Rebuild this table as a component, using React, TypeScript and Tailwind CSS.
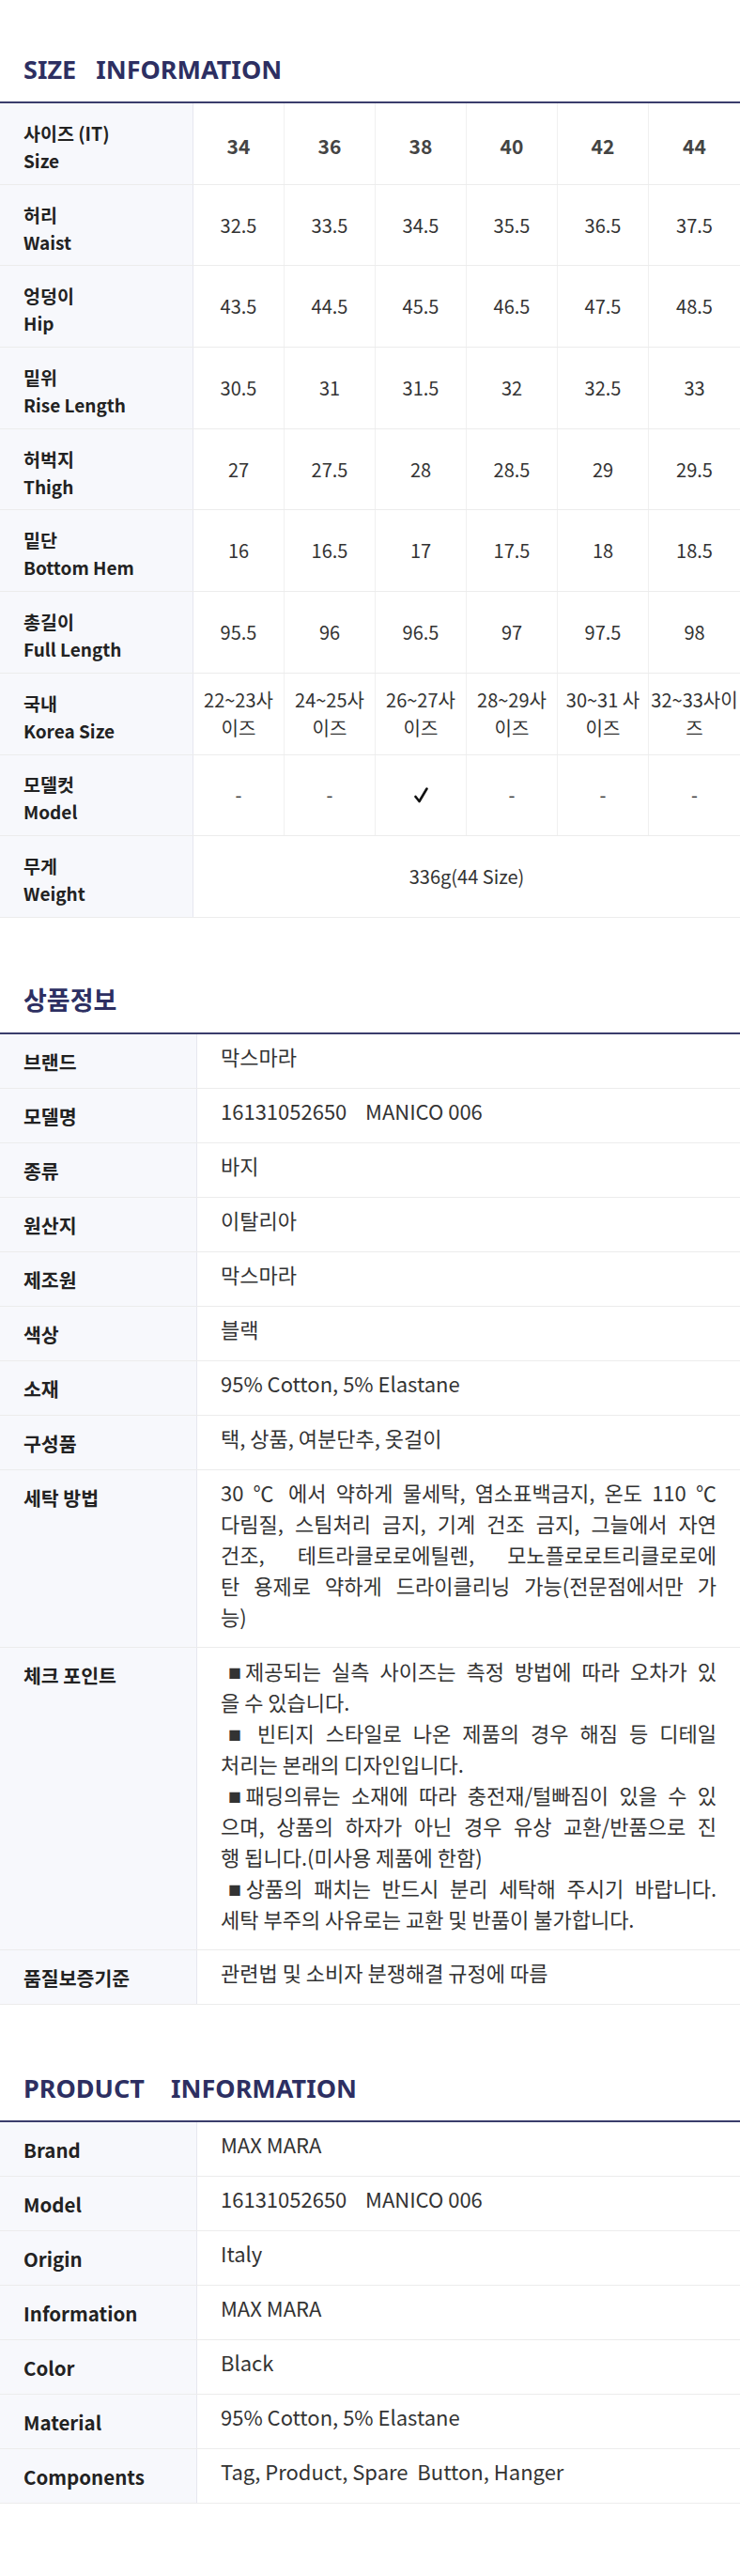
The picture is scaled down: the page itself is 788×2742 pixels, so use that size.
import React from "react";

const sizeRows: { ko: string; en: string; vals: React.ReactNode[]; head?: boolean }[] = [
  { ko: "사이즈 (IT)", en: "Size", vals: ["34", "36", "38", "40", "42", "44"], head: true },
  { ko: "허리", en: "Waist", vals: ["32.5", "33.5", "34.5", "35.5", "36.5", "37.5"] },
  { ko: "엉덩이", en: "Hip", vals: ["43.5", "44.5", "45.5", "46.5", "47.5", "48.5"] },
  { ko: "밑위", en: "Rise Length", vals: ["30.5", "31", "31.5", "32", "32.5", "33"] },
  { ko: "허벅지", en: "Thigh", vals: ["27", "27.5", "28", "28.5", "29", "29.5"] },
  { ko: "밑단", en: "Bottom Hem", vals: ["16", "16.5", "17", "17.5", "18", "18.5"] },
  { ko: "총길이", en: "Full Length", vals: ["95.5", "96", "96.5", "97", "97.5", "98"] },
];

const korea: [string, string][] = [
  ["22~23사", "이즈"],
  ["24~25사", "이즈"],
  ["26~27사", "이즈"],
  ["28~29사", "이즈"],
  ["30~31 사", "이즈"],
  ["32~33사이", "즈"],
];

function Check() {
  return (
    <svg width="15" height="17" viewBox="0 0 15 17" fill="none">
      <path d="M1.5 10 L5.5 15 L13.5 1.5" stroke="#111" strokeWidth="2.6" strokeLinecap="round" strokeLinejoin="round" />
    </svg>
  );
}

function Title({ children }: { children: React.ReactNode }) {
  return (
    <h2 className="pl-[25px] text-[27px] leading-none font-bold text-[#2d2f62] font-['Noto_Sans','Noto_Sans_CJK_KR',sans-serif] whitespace-pre">
      {children}
    </h2>
  );
}

function SizeLabel({ ko, en }: { ko: string; en: string }) {
  return (
    <div className="bg-[#f7f8fc] border-r border-[#e6e7ef] pl-[25px] pt-[6px] flex flex-col justify-center">
      <span className="text-[19.5px] leading-[29px] font-bold text-[#222]">{ko}</span>
      <span className="text-[19px] leading-[29px] font-bold text-[#222]">{en}</span>
    </div>
  );
}

function SizeTable() {
  return (
    <div className="mt-[21px] border-t-2 border-[#3a3d6c]">
      {sizeRows.map((r) => (
        <div key={r.ko} className="grid grid-cols-[206px_repeat(6,minmax(0,1fr))] h-[86.7px] border-b border-[#ececec]">
          <SizeLabel ko={r.ko} en={r.en} />
          {r.vals.map((v, i) => (
            <div
              key={i}
              className={
                r.head
                  ? "flex items-center justify-center border-r border-[#f0f0f0] last:border-r-0 text-[21px] font-bold text-[#444] pt-[6px]"
                  : "flex items-center justify-center border-r border-[#f0f0f0] last:border-r-0 text-[20px] text-[#333]"
              }
            >
              {v}
            </div>
          ))}
        </div>
      ))}
      <div className="grid grid-cols-[206px_repeat(6,minmax(0,1fr))] h-[86.7px] border-b border-[#ececec]">
        <SizeLabel ko="국내" en="Korea Size" />
        {korea.map(([a, b], i) => (
          <div key={i} className="flex flex-col items-center justify-center border-r border-[#f0f0f0] last:border-r-0 text-[20px] leading-[30px] text-[#333] whitespace-nowrap">
            <span>{a}</span>
            <span>{b}</span>
          </div>
        ))}
      </div>
      <div className="grid grid-cols-[206px_repeat(6,minmax(0,1fr))] h-[86.7px] border-b border-[#ececec]">
        <SizeLabel ko="모델컷" en="Model" />
        {[0, 1, 2, 3, 4, 5].map((i) => (
          <div key={i} className="flex items-center justify-center border-r border-[#f0f0f0] last:border-r-0 text-[20px] text-[#333]">
            {i === 2 ? <Check /> : "-"}
          </div>
        ))}
      </div>
      <div className="grid grid-cols-[206px_repeat(6,minmax(0,1fr))] h-[86.7px] border-b border-[#ececec]">
        <SizeLabel ko="무게" en="Weight" />
        <div className="col-span-6 flex items-center justify-center text-[20px] text-[#333]">336g(44 Size)</div>
      </div>
    </div>
  );
}

function J({ children, indent }: { children: React.ReactNode; indent?: boolean }) {
  return <div className={indent ? "pl-[8px] text-justify [text-align-last:justify]" : "text-justify [text-align-last:justify]"}>{children}</div>;
}

function L({ children, indent }: { children: React.ReactNode; indent?: boolean }) {
  return <div className={indent ? "pl-[8px]" : ""}>{children}</div>;
}

function Sq() {
  return <span className="text-[14px] leading-none align-[2px] mr-[-2px]">■</span>;
}

const washing = (
  <>
    <J>30 ℃ 에서 약하게 물세탁, 염소표백금지, 온도 110 ℃</J>
    <J>다림질, 스팀처리 금지, 기계 건조 금지, 그늘에서 자연</J>
    <J>건조, 테트라클로로에틸렌, 모노플로로트리클로로에</J>
    <J>탄 용제로 약하게 드라이클리닝 가능(전문점에서만 가</J>
    <L>능)</L>
  </>
);

const checks = (
  <>
    <J indent>
      <Sq />제공되는 실측 사이즈는 측정 방법에 따라 오차가 있
    </J>
    <L>을 수 있습니다.</L>
    <J indent>
      <Sq /> 빈티지 스타일로 나온 제품의 경우 해짐 등 디테일
    </J>
    <L>처리는 본래의 디자인입니다.</L>
    <J indent>
      <Sq />패딩의류는 소재에 따라 충전재/털빠짐이 있을 수 있
    </J>
    <J>으며, 상품의 하자가 아닌 경우 유상 교환/반품으로 진</J>
    <L>행 됩니다.(미사용 제품에 한함)</L>
    <J indent>
      <Sq />상품의 패치는 반드시 분리 세탁해 주시기 바랍니다.
    </J>
    <L>세탁 부주의 사유로는 교환 및 반품이 불가합니다.</L>
  </>
);

const infoKo: [string, React.ReactNode][] = [
  ["브랜드", "막스마라"],
  ["모델명", "16131052650    MANICO 006"],
  ["종류", "바지"],
  ["원산지", "이탈리아"],
  ["제조원", "막스마라"],
  ["색상", "블랙"],
  ["소재", "95% Cotton, 5% Elastane"],
  ["구성품", "택, 상품, 여분단추, 옷걸이"],
  ["세탁 방법", washing],
  ["체크 포인트", checks],
  ["품질보증기준", "관련법 및 소비자 분쟁해결 규정에 따름"],
];

const infoEn: [string, React.ReactNode][] = [
  ["Brand", "MAX MARA"],
  ["Model", "16131052650    MANICO 006"],
  ["Origin", "Italy"],
  ["Information", "MAX MARA"],
  ["Color", "Black"],
  ["Material", "95% Cotton, 5% Elastane"],
  ["Components", "Tag, Product, Spare  Button, Hanger"],
];

function InfoTable({ rows }: { rows: [string, React.ReactNode][] }) {
  return (
    <div className="mt-[21px] border-t-2 border-[#3a3d6c]">
      {rows.map(([k, v]) => (
        <div key={k} className="grid grid-cols-[210px_minmax(0,1fr)] min-h-[58px] border-b border-[#ececec]">
          <div className="bg-[#f7f8fc] border-r border-[#e6e7ef] pl-[25px] pt-[14px] text-[20.5px] leading-[30px] font-bold text-[#222]">{k}</div>
          <div className="pl-[25px] pr-[25px] pt-[7.5px] pb-[16px] text-[22px] leading-[33px] text-[#333] whitespace-pre-wrap">{v}</div>
        </div>
      ))}
    </div>
  );
}

export default function App() {
  return (
    <div className="w-[788px] bg-white font-['Noto_Sans_CJK_KR',sans-serif] text-[#333] pt-[60px] pb-[81px]">
      <Title>{"SIZE   INFORMATION"}</Title>
      <SizeTable />
      <div className="mt-[74px]">
        <Title>상품정보</Title>
      </div>
      <InfoTable rows={infoKo} />
      <div className="mt-[75px]">
        <Title>{"PRODUCT    INFORMATION"}</Title>
      </div>
      <InfoTable rows={infoEn} />
    </div>
  );
}
